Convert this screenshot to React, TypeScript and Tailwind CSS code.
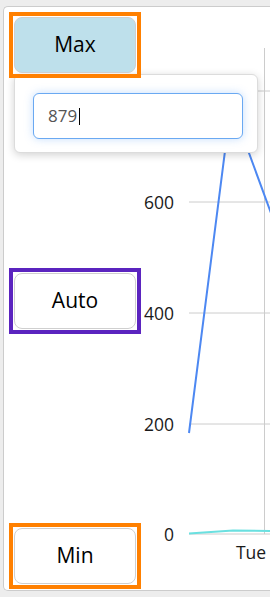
import React from "react"

const font = { fontFamily: '"Open Sans", "Noto Sans", sans-serif' }

function RangeButton({ label, active, ring }: { label: string; active?: boolean; ring: string }) {
  return (
    <div className={`border-[4px] p-[1px] ${ring}`}>
      <button
        className={`block h-[56px] w-[122px] rounded-[8px] border border-[#cfcfcf] text-[21px] text-black ${
          active ? "bg-[#bee0eb]" : "bg-white"
        }`}
      >
        {label}
      </button>
    </div>
  )
}

function Chart() {
  // y ticks: value -> svg y
  const ticks = [
    { v: "600", y: 195 },
    { v: "400", y: 306 },
    { v: "200", y: 417 },
    { v: "0", y: 527 },
  ]
  return (
    <svg width="129" height="583" className="block" style={font}>
      <line x1="48" y1="84" x2="129" y2="84" stroke="#cccccc" />
      {ticks.map((t) => (
        <g key={t.v}>
          <line x1="48" y1={t.y} x2="129" y2={t.y} stroke="#cccccc" />
          <text x="33" y={t.y} textAnchor="end" dominantBaseline="central" fontSize="17.5" fill="#1a1a1a">
            {t.v}
          </text>
        </g>
      ))}
      <line x1="123.5" y1="41" x2="123.5" y2="527" stroke="#cccccc" />
      <polyline points="48,426 90,97 134,217" fill="none" stroke="#4d88f2" strokeWidth="2" />
      <polyline points="48,526.5 92,523.5 131,524" fill="none" stroke="#6ae0e0" strokeWidth="2" />
      <text x="110" y="545" textAnchor="middle" dominantBaseline="central" fontSize="17.5" fill="#1a1a1a">
        Tue
      </text>
    </svg>
  )
}

export default function App() {
  return (
    <div className="h-[597px] w-[270px] overflow-hidden bg-[#ededed] pl-[3px] pt-[6px]" style={font}>
      <div className="relative flex h-[585px] rounded-l-[5px] border border-r-0 border-[#cccccc] bg-white">
        <div className="flex w-[137px] flex-col justify-between pl-[5px] pt-[5px] pb-[1px]">
          <RangeButton label="Max" active ring="relative z-20 border-[#ff8000]" />
          <RangeButton label="Auto" ring="border-[#5b24bf]" />
          <RangeButton label="Min" ring="border-[#ff8000]" />
        </div>
        <Chart />

        {/* max value popover */}
        <div className="absolute left-[10px] top-[67px] z-10 h-[79px] w-[244px] rounded-[6px] border border-[#dcdcdc] bg-white px-[18px] pt-[18px] shadow-[0_2px_8px_rgba(0,0,0,0.18)]">
          <div className="flex h-[46px] w-[210px] items-center rounded-[6px] border border-[#6aa9f2] bg-white pl-[14px] shadow-[0_0_8px_rgba(90,160,250,0.35)]">
            <span className="text-[17px] text-[#555]">879</span>
            <span className="ml-[2px] h-[17px] w-px bg-black" />
          </div>
        </div>
      </div>
    </div>
  )
}
